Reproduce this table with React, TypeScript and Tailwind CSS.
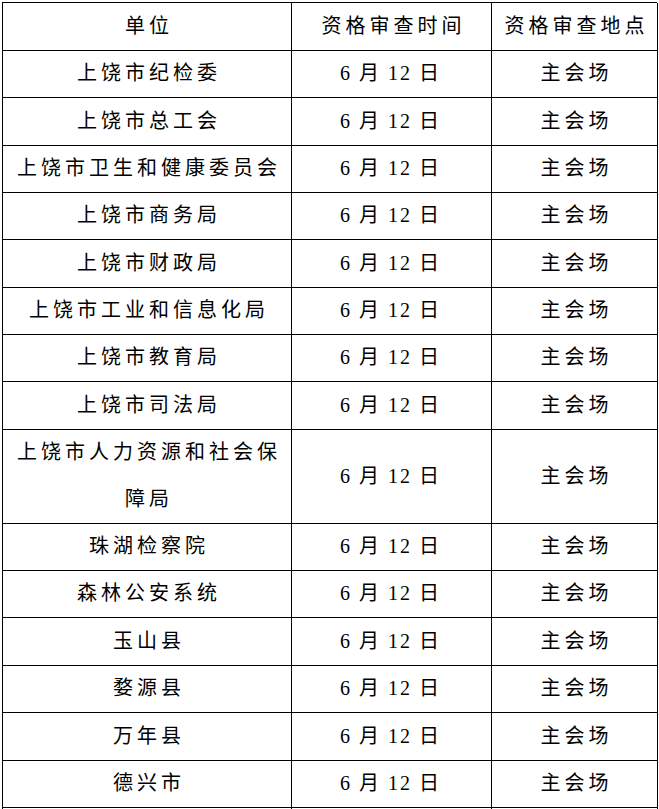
const FONT = '"Liberation Serif", "Noto Sans CJK SC", serif';

type Row = { unit: string[]; h: number };

const rows: Row[] = [
  { unit: ['上饶市纪检委'], h: 48 },
  { unit: ['上饶市总工会'], h: 47 },
  { unit: ['上饶市卫生和健康委员会'], h: 47 },
  { unit: ['上饶市商务局'], h: 48 },
  { unit: ['上饶市财政局'], h: 47 },
  { unit: ['上饶市工业和信息化局'], h: 47 },
  { unit: ['上饶市教育局'], h: 48 },
  { unit: ['上饶市司法局'], h: 47 },
  { unit: ['上饶市人力资源和社会保', '障局'], h: 94 },
  { unit: ['珠湖检察院'], h: 47 },
  { unit: ['森林公安系统'], h: 48 },
  { unit: ['玉山县'], h: 47 },
  { unit: ['婺源县'], h: 48 },
  { unit: ['万年县'], h: 47 },
  { unit: ['德兴市'], h: 48 },
];

function Cell({ children }: { children?: React.ReactNode }) {
  return (
    <div className="flex flex-col items-center justify-center border-r border-b border-black pl-[4px] text-[20px] leading-[47px] tracking-[4px] text-black">
      {children}
    </div>
  );
}

export default function App() {
  return (
    <div className="min-h-screen bg-white pt-[2px] pl-[2px]" style={{ fontFamily: FONT }}>
      <div className="w-[655px] border-t border-l border-black">
        {/* Header */}
        <div className="grid h-[47px] grid-cols-[289px_200px_166px]">
          <Cell>单位</Cell>
          <Cell>资格审查时间</Cell>
          <Cell>资格审查地点</Cell>
        </div>

        {rows.map((r, i) => (
          <div key={i} className="grid grid-cols-[289px_200px_166px]" style={{ height: r.h }}>
            <Cell>
              {r.unit.map((line, j) => (
                <span key={j} className="block">
                  {line}
                </span>
              ))}
            </Cell>
            <Cell>
              <span className="-ml-[6px] tracking-[2px]">6&nbsp;月&nbsp;12&nbsp;日</span>
            </Cell>
            <Cell>主会场</Cell>
          </div>
        ))}

        {/* next row, cut off by the page edge */}
        <div className="grid h-[47px] grid-cols-[289px_200px_166px]">
          <Cell />
          <Cell />
          <Cell />
        </div>
      </div>
    </div>
  );
}
